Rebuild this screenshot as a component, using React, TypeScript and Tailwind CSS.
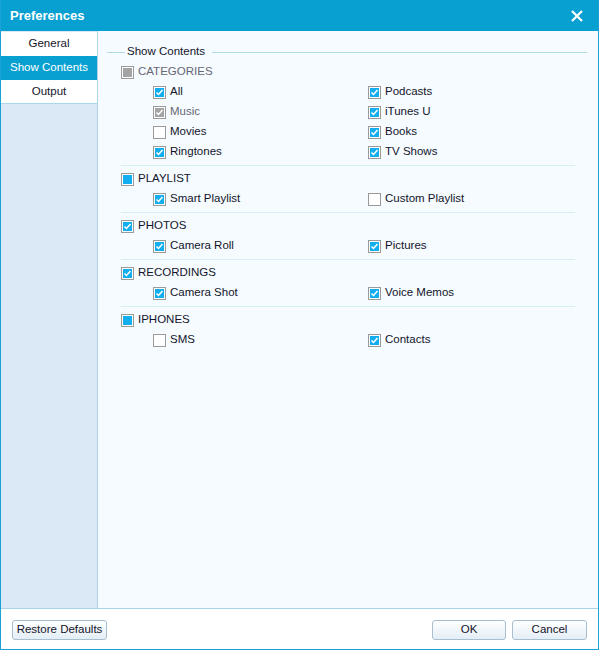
import React from 'react';

type State = 'on' | 'off' | 'partial' | 'gray' | 'grayOn';

const Box = ({ state }: { state: State }) => {
  const fill =
    state === 'off'
      ? 'bg-white'
      : state === 'gray' || state === 'grayOn'
      ? 'bg-[#a3a3a3]'
      : 'bg-[#13aef0]';
  return (
    <span className="w-[13px] h-[13px] border border-[#9a9a9a] bg-white p-px flex shrink-0">
      <span className={`flex-1 flex items-center justify-center ${fill}`}>
        {(state === 'on' || state === 'grayOn') && (
          <svg width="9" height="9" viewBox="0 0 9 9">
            <path d="M1.5 4.5 L3.5 6.5 L7.5 2" fill="none" stroke="white" strokeWidth="1.5" />
          </svg>
        )}
      </span>
    </span>
  );
};

type Item = { label: string; state: State; muted?: boolean };

const Check = ({ item }: { item: Item }) => (
  <div className="h-[20px] flex items-center gap-[4px]">
    <Box state={item.state} />
    <span className={item.muted ? 'text-[#666674]' : 'text-[#14142a]'}>{item.label}</span>
  </div>
);

const sections: { head: Item; left: Item[]; right: Item[] }[] = [
  {
    head: { label: 'CATEGORIES', state: 'gray', muted: true },
    left: [
      { label: 'All', state: 'on' },
      { label: 'Music', state: 'grayOn', muted: true },
      { label: 'Movies', state: 'off' },
      { label: 'Ringtones', state: 'on' },
    ],
    right: [
      { label: 'Podcasts', state: 'on' },
      { label: 'iTunes U', state: 'on' },
      { label: 'Books', state: 'on' },
      { label: 'TV Shows', state: 'on' },
    ],
  },
  {
    head: { label: 'PLAYLIST', state: 'partial' },
    left: [{ label: 'Smart Playlist', state: 'on' }],
    right: [{ label: 'Custom Playlist', state: 'off' }],
  },
  {
    head: { label: 'PHOTOS', state: 'on' },
    left: [{ label: 'Camera Roll', state: 'on' }],
    right: [{ label: 'Pictures', state: 'on' }],
  },
  {
    head: { label: 'RECORDINGS', state: 'on' },
    left: [{ label: 'Camera Shot', state: 'on' }],
    right: [{ label: 'Voice Memos', state: 'on' }],
  },
  {
    head: { label: 'IPHONES', state: 'partial' },
    left: [{ label: 'SMS', state: 'off' }],
    right: [{ label: 'Contacts', state: 'on' }],
  },
];

const Btn = ({ children, w }: { children: React.ReactNode; w: string }) => (
  <button
    className={`${w} h-[20px] rounded-[3px] border border-[#a9bfcf] bg-gradient-to-b from-white to-[#e4eef6] text-[#14142a] flex items-center justify-center`}
  >
    {children}
  </button>
);

export default function App() {
  return (
    <div
      className="w-[599px] h-[650px] flex flex-col bg-white border-x border-b border-[#1aa3d8] text-[11.5px] overflow-hidden"
      style={{ fontFamily: '"Liberation Sans", Arial, sans-serif' }}
    >
      {/* Title bar */}
      <div className="h-[31px] shrink-0 bg-[#08a0d1] -mx-px flex items-center justify-between pl-[10px] pr-[16px]">
        <span className="text-white font-bold text-[13px]">Preferences</span>
        <svg width="12" height="12" viewBox="0 0 12 12">
          <path d="M1 1 L11 11 M11 1 L1 11" stroke="white" strokeWidth="2.2" />
        </svg>
      </div>

      <div className="flex-1 flex min-h-0">
        {/* Sidebar */}
        <div className="w-[97px] shrink-0 bg-[#dbe8f5] border-r border-[#a9d4e8] flex flex-col pt-px">
          <div className="h-[24px] bg-white flex items-center justify-center text-[#14142a]">General</div>
          <div className="h-[24px] bg-[#08a0d1] flex items-center justify-center text-white">Show Contents</div>
          <div className="h-[24px] bg-white flex items-center justify-center text-[#14142a] border-b border-[#a9d8ea]">
            Output
          </div>
        </div>

        {/* Content */}
        <div className="flex-1 bg-[#f5fbff] pt-[11px] pl-[9px] pr-[11px]">
          <div className="h-[20px] flex items-center">
            <span className="w-[18px] h-px bg-[#b2dbe8]" />
            <span className="px-[2px] text-[#14142a]">Show Contents</span>
            <span className="flex-1 h-px bg-[#b2dbe8] ml-[5px]" />
          </div>
          <div className="pl-[14px] pr-[12px]">
            {sections.map((s, i) => (
              <div key={s.head.label}>
                {i > 0 && <div className="h-px bg-[#d8eef6] my-[3px]" />}
                <Check item={s.head} />
                <div className="flex pl-[32px]">
                  <div className="w-[215px] flex flex-col">
                    {s.left.map((it) => (
                      <Check key={it.label} item={it} />
                    ))}
                  </div>
                  <div className="flex flex-col">
                    {s.right.map((it) => (
                      <Check key={it.label} item={it} />
                    ))}
                  </div>
                </div>
              </div>
            ))}
          </div>
        </div>
      </div>

      {/* Footer */}
      <div className="h-[41px] shrink-0 border-t border-[#a9d4e8] flex items-center px-[11px] pt-[1px]">
        <Btn w="w-[95px]">Restore Defaults</Btn>
        <div className="flex-1" />
        <Btn w="w-[74px]">OK</Btn>
        <div className="w-[6px]" />
        <Btn w="w-[75px]">Cancel</Btn>
      </div>
    </div>
  );
}
